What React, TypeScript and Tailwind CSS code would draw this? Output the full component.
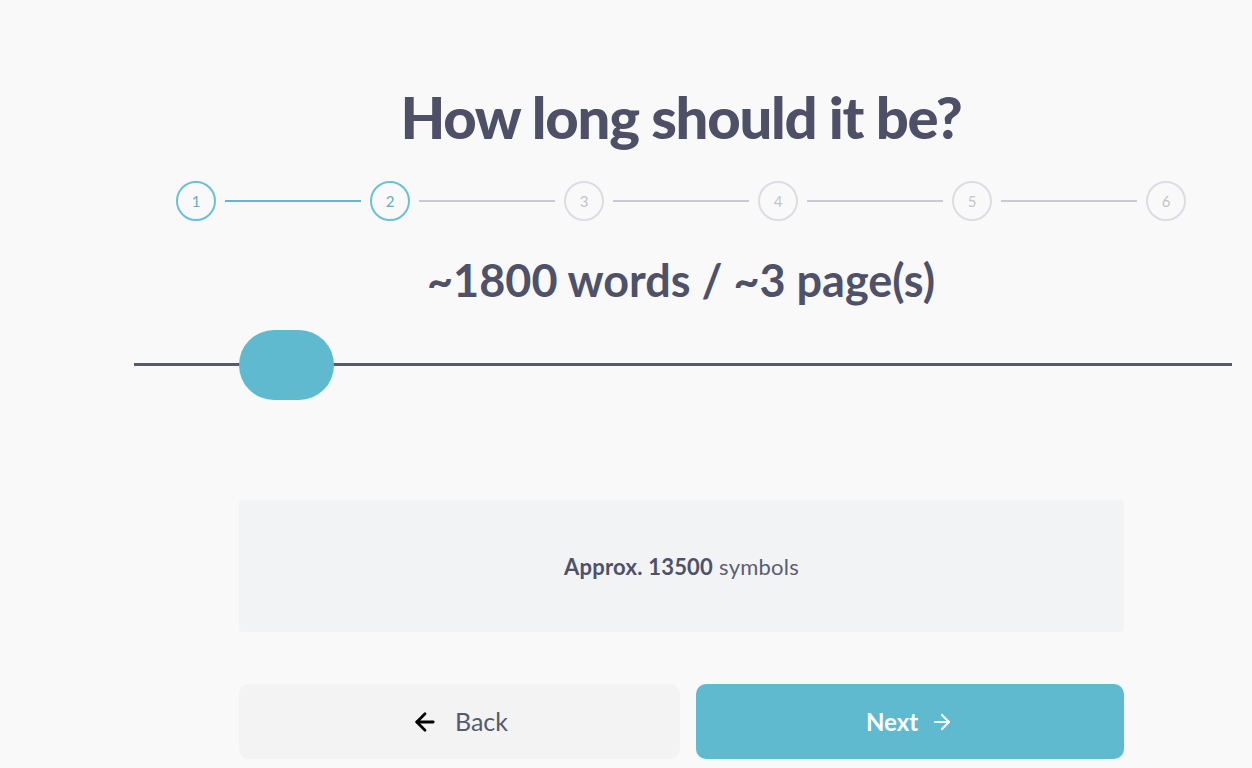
import { ArrowLeft, ArrowRight } from 'lucide-react';

const steps = [1, 2, 3, 4, 5, 6];
const current = 2;

export default function App() {
  return (
    <div
      className="min-h-screen bg-[#f9f9f9] text-[#4e5168] overflow-hidden"
      style={{ fontFamily: 'Lato, "Noto Sans", sans-serif' }}
    >
      <div className="pl-[134px] pr-[20px] pt-[78px]">
        {/* title */}
        <h1 className="mr-[4px] text-center text-[58px] leading-[78px] font-black tracking-[-0.022em] text-[#4d5066]">
          How long should it be?
        </h1>

        {/* stepper */}
        <div className="mr-[4px] mt-[25px] flex items-center justify-center">
          {steps.map((s, i) => {
            const done = s <= current;
            return (
              <div key={s} className="flex items-center">
                {i > 0 && (
                  <div
                    className={`mx-[9px] h-[2px] w-[136px] ${
                      s <= current ? 'bg-[#5fb9d0]' : 'bg-[#c9cad3]'
                    }`}
                  />
                )}
                <div
                  className={`flex h-[40px] w-[40px] items-center justify-center rounded-full border-2 text-[15px] ${
                    done ? 'border-[#6cc0d5] text-[#5fb0c8]' : 'border-[#dcdce2] text-[#c3c4cc]'
                  }`}
                >
                  {s}
                </div>
              </div>
            );
          })}
        </div>

        {/* words */}
        <div className="mr-[4px] mt-[34px] text-center text-[45px] leading-[50px] font-bold text-[#4e5168]">
          ~1800 words / ~3 page(s)
        </div>

        {/* slider */}
        <div className="relative mt-[25px] h-[70px]">
          <div className="absolute left-0 right-0 top-[33px] h-[3px] bg-[#555a6e]" />
          <div className="absolute left-[105px] top-0 h-[70px] w-[95px] rounded-full bg-[#5fb9cf]" />
        </div>

        {/* summary + actions */}
        <div className="mt-[100px] ml-[105px] w-[885px]">
          <div className="flex h-[132px] items-center justify-center rounded bg-[#f2f3f5] text-[22px] tracking-[0.01em]">
            <span className="font-bold text-[#4e5168]">Approx. 13500</span>
            <span className="ml-[6px] text-[#5a5e72]">symbols</span>
          </div>

          <div className="mt-[52px] flex gap-[16px]">
            <button className="flex h-[75px] w-[441px] items-center justify-center gap-[16px] rounded-[10px] bg-[#f3f3f3] text-[25px] text-[#555a6e]">
              <ArrowLeft size={28} strokeWidth={2.4} className="text-black" />
              <span>Back</span>
            </button>
            <button className="flex h-[75px] flex-1 items-center justify-center gap-[12px] rounded-[10px] bg-[#5fb9cf] text-[24px] font-bold text-white">
              <span>Next</span>
              <ArrowRight size={24} strokeWidth={2.2} />
            </button>
          </div>
        </div>
      </div>
    </div>
  );
}
